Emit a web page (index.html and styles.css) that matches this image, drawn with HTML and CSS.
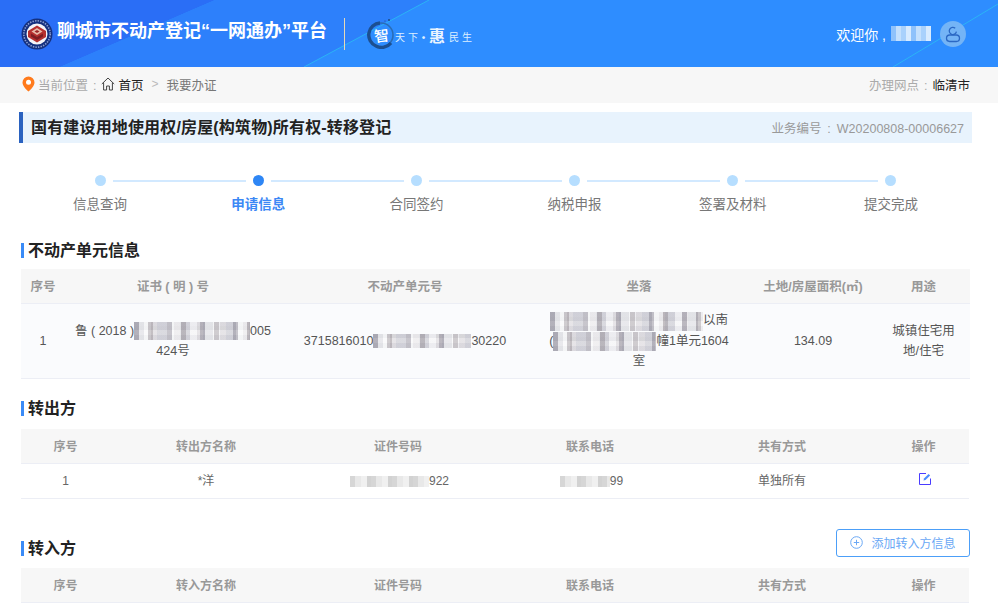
FILE: index.html
```html
<!DOCTYPE html>
<html lang="zh-CN">
<head>
<meta charset="utf-8">
<title>聊城市不动产登记“一网通办”平台</title>
<link rel="stylesheet" href="styles.css">
</head>
<body>
<header class="topbar">
  <svg class="topbar-deco" viewBox="0 0 998 67" preserveAspectRatio="none" aria-hidden="true">
    <polygon points="0,0 215,0 60,67 0,67" fill="#2a6ef6"/>
    <polygon points="215,0 429,0 304,67 60,67" fill="#2d80fb"/>
    <line x1="304" y1="67" x2="429" y2="0" stroke="#2bb4f5" stroke-width="1"/>
    <line x1="893" y1="67" x2="998" y2="4" stroke="#2bb4f5" stroke-width="1"/>
  </svg>
  <div class="brand">
    <svg class="emblem" viewBox="0 0 32 32" aria-hidden="true">
      <circle cx="16" cy="16" r="15.5" fill="#14307f"/>
      <circle cx="16" cy="16" r="13.2" fill="none" stroke="#8d9fd0" stroke-width="1.6" stroke-dasharray="1.4 1.2"/>
      <circle cx="16" cy="16" r="10.5" fill="#f4f4f8"/>
      <polygon points="16,7.5 25,13 25,19 16,24.5 7,19 7,13" fill="#b5302f"/>
      <polygon points="16,10 21.5,13.5 16,17 10.5,13.5" fill="#e8b9a8"/>
      <polygon points="16,12 18.5,13.5 16,15 13.5,13.5" fill="#9c2527"/>
      <polygon points="16,19 22,15.6 22,18.5 16,22 10,18.5 10,15.6" fill="#7d1d22"/>
    </svg>
    <h1 class="brand-name">聊城市不动产登记“一网通办”平台</h1>
    <span class="brand-divider"></span>
    <div class="slogan">
      <svg class="slogan-ring" viewBox="0 0 32 32" aria-hidden="true">
        <circle cx="16" cy="18" r="12" fill="none" stroke="#2a6db5" stroke-width="1.6"/>
        <path d="M15 6a12 12 0 0 0 -4 23a12 12 0 0 0 15 -3" fill="none" stroke="#1c4f90" stroke-width="3.4"/>
        <circle cx="24" cy="3" r="1" fill="#1d4a85"/>
        <circle cx="20" cy="4" r="0.6" fill="#1d4a85"/>
      </svg>
      <span class="slogan-zhi">智</span>
      <span class="slogan-small">天</span>
      <span class="slogan-small">下</span>
      <span class="slogan-dot">·</span>
      <span class="slogan-hui">惠</span>
      <span class="slogan-small">民</span>
      <span class="slogan-small">生</span>
    </div>
  </div>
  <div class="user">
    <span class="user-hello">欢迎你 ,</span>
    <span class="mosaic mosaic-user"></span>
    <span class="avatar">
      <svg viewBox="0 0 26 26" aria-hidden="true">
        <path d="M16.4 10.6a3.6 3.6 0 1 1 -1.2 -3.4" fill="none" stroke="#2b68c4" stroke-width="1.3"/>
        <rect x="6.5" y="14" width="13" height="6.5" rx="3.2" fill="none" stroke="#2b68c4" stroke-width="1.3"/>
      </svg>
    </span>
  </div>
</header>

<nav class="crumbs">
  <div class="crumbs-left">
    <svg class="pin" viewBox="0 0 13 16" aria-hidden="true">
      <path d="M6.5 0.5a6 6 0 0 1 6 6c0 3.6-3.6 6.8-6 9c-2.4-2.2-6-5.4-6-9a6 6 0 0 1 6-6z" fill="#ff7a1c"/>
      <circle cx="6.5" cy="6.3" r="2.5" fill="#fff"/>
    </svg>
    <span class="crumb-label">当前位置 :</span>
    <svg class="home" viewBox="0 0 14 14" aria-hidden="true">
      <path d="M0.8 7L7 1l6.2 6M2.6 5.6V13h3V9h2.8v4h3V5.6" fill="none" stroke="#444" stroke-width="1"/>
    </svg>
    <span class="crumb-home">首页</span>
    <span class="crumb-sep">&gt;</span>
    <span class="crumb-current">我要办证</span>
  </div>
  <div class="crumbs-right"><span class="crumb-label">办理网点 : </span><span class="crumb-home">临清市</span></div>
</nav>

<main class="page">
  <div class="title-bar">
    <h2 class="title-text">国有建设用地使用权/房屋(构筑物)所有权-转移登记</h2>
    <span class="title-no">业务编号 : W20200808-00006627</span>
  </div>

  <ol class="steps">
    <li class="step step-first"><div class="step-track"><i class="seg"></i><b class="dot"></b><i class="seg"></i></div><span class="step-name">信息查询</span></li>
    <li class="step step-active"><div class="step-track"><i class="seg"></i><b class="dot"></b><i class="seg"></i></div><span class="step-name">申请信息</span></li>
    <li class="step"><div class="step-track"><i class="seg"></i><b class="dot"></b><i class="seg"></i></div><span class="step-name">合同签约</span></li>
    <li class="step"><div class="step-track"><i class="seg"></i><b class="dot"></b><i class="seg"></i></div><span class="step-name">纳税申报</span></li>
    <li class="step"><div class="step-track"><i class="seg"></i><b class="dot"></b><i class="seg"></i></div><span class="step-name">签署及材料</span></li>
    <li class="step step-last"><div class="step-track"><i class="seg"></i><b class="dot"></b><i class="seg"></i></div><span class="step-name">提交完成</span></li>
  </ol>

  <div class="sec-head sec-head-1"><h3 class="sec-title">不动产单元信息</h3></div>
  <table class="grid grid-unit">
    <colgroup><col class="u1"><col class="u2"><col class="u3"><col class="u4"><col class="u5"><col class="u6"></colgroup>
    <thead><tr><th>序号</th><th>证书 ( 明 ) 号</th><th>不动产单元号</th><th>坐落</th><th>土地/房屋面积(㎡)</th><th>用途</th></tr></thead>
    <tbody>
      <tr>
        <td>1</td>
        <td>鲁 ( 2018 )<span class="mosaic mosaic-cert"></span>005<br>424号</td>
        <td>3715816010<span class="mosaic mosaic-unit"></span>30220</td>
        <td><span class="mosaic mosaic-addr1"></span>以南<br>(<span class="mosaic mosaic-addr2"></span>幢1单元1604<br>室</td>
        <td>134.09</td>
        <td>城镇住宅用<br>地/住宅</td>
      </tr>
    </tbody>
  </table>

  <div class="sec-head sec-head-2"><h3 class="sec-title">转出方</h3></div>
  <table class="grid grid-party">
    <colgroup><col class="p1"><col class="p2"><col class="p2"><col class="p2"><col class="p2"><col class="p3"></colgroup>
    <thead><tr><th>序号</th><th>转出方名称</th><th>证件号码</th><th>联系电话</th><th>共有方式</th><th>操作</th></tr></thead>
    <tbody>
      <tr>
        <td class="cell-no">1</td>
        <td>*洋</td>
        <td><span class="mosaic mosaic-id"></span>922</td>
        <td><span class="mosaic mosaic-tel"></span>99</td>
        <td>单独所有</td>
        <td>
          <svg class="edit" viewBox="0 0 12 12" aria-hidden="true">
            <path d="M7 .5H.5v11h11V5.5" fill="none" stroke="#4a3cff" stroke-width="1"/>
            <path d="M4.5 7.5l0.5-2L9.6 1l1.5 1.4L6.5 7z" fill="#4a8cff"/>
          </svg>
        </td>
      </tr>
    </tbody>
  </table>

  <div class="sec-head sec-head-3">
    <h3 class="sec-title">转入方</h3>
    <button class="add-btn" type="button">
      <svg class="add-icon" viewBox="0 0 13 13" aria-hidden="true">
        <circle cx="6.5" cy="6.5" r="5.8" fill="none" stroke="#6aa8f5" stroke-width="1"/>
        <path d="M6.5 3.8v5.4M3.8 6.5h5.4" stroke="#6aa8f5" stroke-width="1"/>
      </svg>
      添加转入方信息
    </button>
  </div>
  <table class="grid grid-party">
    <colgroup><col class="p1"><col class="p2"><col class="p2"><col class="p2"><col class="p2"><col class="p3"></colgroup>
    <thead><tr><th>序号</th><th>转入方名称</th><th>证件号码</th><th>联系电话</th><th>共有方式</th><th>操作</th></tr></thead>
  </table>
</main>
</body>
</html>
```

FILE: styles.css
```css
* { box-sizing: border-box; }
html, body { margin: 0; padding: 0; height: 100%; overflow: hidden; background: #fff; }
body { font-family: "Liberation Sans", "Noto Sans CJK SC", sans-serif; color: #555; font-size: 12.5px; }
h1, h2, h3, ol { margin: 0; padding: 0; }

/* top bar */
.topbar {
  position: relative;
  height: 67px;
  padding: 0 32px 0 21px;
  display: flex;
  align-items: center;
  justify-content: space-between;
  background: #2e8dff;
  overflow: hidden;
}
.topbar-deco { position: absolute; left: 0; top: 0; width: 100%; height: 100%; }
.brand, .user { position: relative; display: flex; align-items: center; }
.emblem { width: 32px; height: 32px; flex: none; }
.brand-name { margin: 0 0 5px 4px; font-size: 18px; font-weight: 700; color: #fff; line-height: 26px; white-space: nowrap; width: 270px; }
.brand-divider { width: 1px; height: 32px; margin-left: 17px; background: #e6d9b8; }
.slogan { position: relative; margin-left: 20px; height: 32px; width: 110px; display: flex; align-items: center; color: #dcefff; font-family: "Noto Sans CJK SC", sans-serif; }
.slogan-ring { position: absolute; left: 0; top: -1px; width: 32px; height: 32px; }
.slogan-zhi { position: relative; margin: 3px 0 0 9px; width: 18px; font-size: 15px; font-weight: 500; color: #fff; line-height: 20px; transform: rotate(-8deg); }
.slogan-small { margin: 6px 0 0 3px; width: 10px; font-size: 10px; line-height: 12px; }
.slogan-dot { width: 11px; margin: 6px 0 0; font-size: 11px; font-weight: 700; }
.slogan-hui { width: 16px; margin: 3px 1px 0 0; font-size: 16px; font-weight: 700; color: #eaf5ff; }
.user-hello { color: #fff; font-size: 14px; }
.avatar { margin-left: 9px; width: 26px; height: 26px; border-radius: 50%; background: #74b4f6; display: block; }
.avatar svg { display: block; width: 26px; height: 26px; }

/* breadcrumb */
.crumbs { height: 36px; padding: 0 28px 2px 22px; background: #f7f7f7; display: flex; align-items: center; justify-content: space-between; }
.crumbs-left { display: flex; align-items: center; }
.pin { width: 13px; height: 16px; margin-right: 3px; }
.crumb-label { color: #aaa; word-spacing: 1.5px; }
.home { width: 14px; height: 14px; margin-left: 5px; margin-right: 3px; }
.crumb-home { color: #222; }
.crumb-sep { margin: 0 8px; color: #bbb; font-size: 12px; }
.crumb-current { color: #777; }

/* page */
.page { padding: 9px 28px 0 21px; }
.title-bar { margin: 0 -2px; height: 31px; padding: 0 8px; display: flex; align-items: center; justify-content: space-between; background: #e8f3fd; border-left: 4px solid #2a62c0; }
.title-text { font-size: 16px; font-weight: 700; color: #222; line-height: 24px; letter-spacing: 0.16px; }
.title-no { color: #999; word-spacing: 2.5px; }

/* steps */
.steps { list-style: none; padding-top: 32px; display: flex; }
.step { flex: 1 1 0; display: flex; flex-direction: column; align-items: center; min-width: 0; }
.step-track { width: 100%; height: 11px; display: flex; align-items: center; }
.seg { flex: 1; height: 2px; background: #d2e9ff; margin: 0 7px 0 0; }
.seg + .dot + .seg { margin: 0 0 0 7px; }
.dot { width: 11px; height: 11px; flex: none; border-radius: 50%; background: #b6deff; }
.step-first .seg:first-child, .step-last .seg:last-child { visibility: hidden; }
.step-name { margin-top: 9px; line-height: 20px; font-size: 13.5px; color: #777; }
.step-active .dot { background: #2e86f5; }
.step-active .step-name { color: #3c88f5; font-weight: 700; }

/* section heading */
.sec-head { display: flex; justify-content: space-between; }
.sec-title { height: 20px; line-height: 21px; font-size: 16px; font-weight: 700; color: #222; padding-left: 7px; background: linear-gradient(#3a8bf7, #3a8bf7) left center / 3px 15px no-repeat; }
.sec-head-1 { margin-top: 25px; margin-bottom: 9px; }
.sec-head-2 { margin-top: 19px; margin-bottom: 11px; }
.sec-head-3 { margin-top: 30px; margin-bottom: 10px; height: 29px; align-items: flex-end; }

.add-btn { align-self: flex-start; width: 134px; height: 28px; padding: 0 0 1px; display: flex; align-items: center; justify-content: center; background: #fff; border: 1px solid #4c9ff8; border-radius: 3px; color: #6aa8f5; font: 12px "Liberation Sans", "Noto Sans CJK SC", sans-serif; }
.add-icon { width: 13px; height: 13px; margin-right: 8px; }

/* tables */
.grid { width: 100%; border-collapse: separate; border-spacing: 0; table-layout: fixed; }
.grid th { height: 35px; padding: 0 0 2px; background: #f7f7f7; border-bottom: 1px solid #eceef5; color: #999; font-weight: 700; text-align: center; }
.grid td { padding: 0 0 1px; border-bottom: 1px solid #eceef5; text-align: center; line-height: 20px; }
.grid-unit { font-size: 12.5px; }
.grid-unit td { height: 75px; background: #fafbfd; }
.grid-party { font-size: 12px; width: 948px; }
.grid-party td { height: 35px; color: #666; }
.cell-no { color: #8a7a70; }
.u1 { width: 44px; } .u2 { width: 216px; } .u3 { width: 248px; } .u4 { width: 220px; } .u5 { width: 128px; } .u6 { width: 93px; }
.p1 { width: 89px; } .p2 { width: 192px; } .p3 { width: 91px; }

.edit { width: 12px; height: 12px; display: block; margin: 0 0 4px 41px; }

/* redacted values */
.mosaic {
  display: inline-block;
  height: 18px;
  vertical-align: middle;
  filter: blur(0.6px);
  background:
    repeating-linear-gradient(90deg, rgba(110,105,120,.34) 0 5px, rgba(255,255,255,.45) 5px 14px, rgba(120,110,115,.30) 14px 19px, rgba(255,255,255,.1) 19px 33px),
    repeating-linear-gradient(90deg, rgba(150,150,165,.30) 0 10px, rgba(255,255,255,.3) 10px 17px, rgba(170,160,165,.2) 17px 23px),
    repeating-linear-gradient(0deg, rgba(205,205,212,.55) 0 5px, rgba(238,238,242,.8) 5px 10px, rgba(190,190,198,.5) 10px 14px);
}
.mosaic-user { width: 40px; height: 15px; margin-left: 5px; filter: none; background: repeating-linear-gradient(90deg, #8fc2fb 0 5px, #c4e0fd 5px 10px, #a9d1fc 10px 15px, #d8ebff 15px 20px); }
.mosaic-cert { width: 116px; }
.mosaic-unit { width: 98px; height: 14px; }
.mosaic-addr1 { width: 153px; height: 19px; }
.mosaic-addr2 { width: 103px; height: 19px; }
.mosaic-id, .mosaic-tel { height: 11px; margin-left: 3px; filter: none; background: repeating-linear-gradient(90deg, #d6d6d6 0 5px, #e8e8e8 5px 11px, #f0f0f0 11px 17px, #d2d2d2 17px 21px); }
.mosaic-id { width: 79px; }
.mosaic-tel { width: 50px; }
```
